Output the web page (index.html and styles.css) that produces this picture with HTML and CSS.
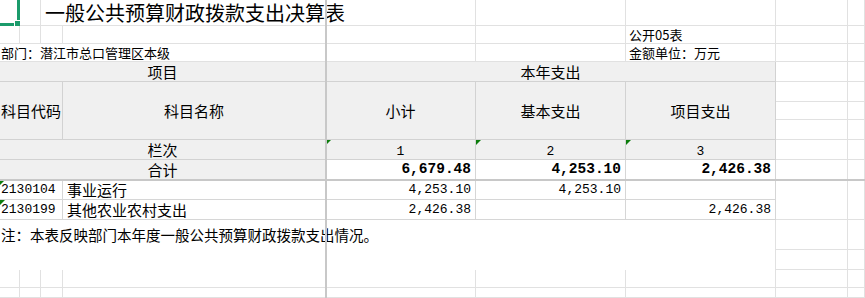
FILE: index.html
```html
<!DOCTYPE html>
<html lang="zh-CN">
<head>
<meta charset="utf-8">
<title>一般公共预算财政拨款支出决算表</title>
<link rel="stylesheet" href="styles.css">
</head>
<body>
<div class="sheet">
  <!-- row 1 -->
  <div class="c sel"></div>
  <div class="c"></div>
  <div class="c title span3">一般公共预算财政拨款支出决算表</div>
  <div class="c"></div><div class="c"></div><div class="c"></div><div class="c"></div>
  <!-- row 2 -->
  <div class="c"></div><div class="c"></div><div class="c"></div><div class="c"></div>
  <div class="c"></div><div class="c"></div>
  <div class="c txt">公开05表</div>
  <div class="c"></div><div class="c"></div>
  <!-- row 3 -->
  <div class="c txt left span4 nb">部门：潜江市总口管理区本级</div>
  <div class="c"></div><div class="c"></div>
  <div class="c txt">金额单位：万元</div>
  <div class="c"></div><div class="c"></div>
  <!-- row 4 -->
  <div class="c h span4">项目</div>
  <div class="c h span3">本年支出</div>
  <div class="c"></div><div class="c"></div>
  <!-- row 5-7 -->
  <div class="c h span3 rs3">科目代码</div>
  <div class="c h rs3">科目名称</div>
  <div class="c h rs3">小计</div>
  <div class="c h rs3">基本支出</div>
  <div class="c h rs3">项目支出</div>
  <div class="c"></div><div class="c"></div>
  <div class="c"></div><div class="c"></div>
  <div class="c"></div><div class="c"></div>
  <!-- row 8 -->
  <div class="c h span4">栏次</div>
  <div class="c h idx mark">1</div>
  <div class="c h idx mark">2</div>
  <div class="c h idx mark">3</div>
  <div class="c"></div><div class="c"></div>
  <!-- row 9 -->
  <div class="c h span4">合计</div>
  <div class="c num tot">6,679.48</div>
  <div class="c num tot">4,253.10</div>
  <div class="c num tot">2,426.38</div>
  <div class="c"></div><div class="c"></div>
  <!-- row 10 -->
  <div class="c code span3 mark">2130104</div>
  <div class="c name">事业运行</div>
  <div class="c num">4,253.10</div>
  <div class="c num">4,253.10</div>
  <div class="c num"></div>
  <div class="c rs2"></div><div class="c rs2"></div>
  <!-- row 11 -->
  <div class="c code span3 mark">2130199</div>
  <div class="c name">其他农业农村支出</div>
  <div class="c num">2,426.38</div>
  <div class="c num"></div>
  <div class="c num">2,426.38</div>
  <!-- row 12-13 -->
  <div class="c note span7 rs2">注：本表反映部门本年度一般公共预算财政拨款支出情况。</div>
  <div class="c"></div><div class="c"></div>
  <div class="c"></div><div class="c"></div>
  <!-- row 14 -->
  <div class="c"></div><div class="c"></div><div class="c"></div><div class="c"></div><div class="c"></div>
  <div class="c"></div><div class="c"></div><div class="c"></div><div class="c"></div>
  <!-- row 15 -->
  <div class="c"></div><div class="c"></div><div class="c"></div><div class="c"></div><div class="c"></div>
  <div class="c"></div><div class="c"></div><div class="c"></div><div class="c"></div>

  <div class="freeze-v"></div>
  <div class="freeze-h"></div>
</div>
</body>
</html>
```

FILE: styles.css
```css
html, body {
  margin: 0;
  padding: 0;
  background: #ffffff;
  overflow: hidden;
}

body {
  font-family: "Noto Sans CJK SC", "Noto Sans", sans-serif;
  color: #000000;
}

.sheet {
  position: relative;
  display: grid;
  grid-template-columns: 20px 21px 22px 263px 150px 150px 150px 72px 17px;
  grid-template-rows: 26px 18px 18px 20px 20px 18px 20px 20px 20px 20px 20px 30px 20px 18px 10px;
  width: 865px;
  height: 298px;
  overflow: hidden;
}

.c {
  box-sizing: border-box;
  position: relative;
  display: flex;
  align-items: center;
  border-right: 1px solid #e1e1e1;
  border-bottom: 1px solid #e1e1e1;
  white-space: nowrap;
  font-size: 13px;
  line-height: 1;
  min-width: 0;
}

.span3 { grid-column: span 3; }
.span4 { grid-column: span 4; }
.span7 { grid-column: span 7; }
.rs2 { grid-row: span 2; }
.rs3 { grid-row: span 3; }

.nb { border-right: none; }

/* selected cell A1 */
.sel {
  border-right: 3px solid #1b9b6b;
  border-bottom: 3px solid #1b9b6b;
}
.sel::after {
  content: "";
  position: absolute;
  right: -4px;
  bottom: -4px;
  width: 5px;
  height: 5px;
  background: #1b9b6b;
  border: 1px solid #ffffff;
}

.title {
  font-size: 20px;
  padding-left: 4px;
  padding-top: 1px;
}

.txt {
  padding-left: 3px;
  font-size: 13px;
}
.left {
  padding-left: 1px;
}

.h {
  background: #f0f0f0;
  border-right-color: #d2d2d2;
  border-bottom-color: #d2d2d2;
  justify-content: center;
  font-size: 15px;
}

.idx {
  font-family: "Liberation Mono", monospace;
  font-size: 13px;
  padding-top: 4px;
}

.num {
  justify-content: flex-end;
  padding-right: 4px;
  font-family: "Liberation Mono", monospace;
  font-size: 13px;
  border-right-color: #d6d6d6;
  border-bottom-color: #d6d6d6;
}

.tot {
  font-weight: bold;
  font-size: 14.5px;
}

.code {
  padding-left: 1px;
  font-family: "Liberation Mono", monospace;
  font-size: 13px;
  border-right-color: #d6d6d6;
  border-bottom-color: #d6d6d6;
}

.name {
  padding-left: 4px;
  font-size: 15px;
  border-right-color: #d6d6d6;
  border-bottom-color: #d6d6d6;
}

.note {
  align-items: flex-start;
  padding-top: 8px;
  padding-left: 1px;
  font-size: 14.5px;
  border-bottom: none;
}

.mark::before {
  content: "";
  position: absolute;
  left: 0;
  top: 0;
  border-top: 5px solid #0c7d0c;
  border-right: 5px solid transparent;
}

.freeze-v {
  position: absolute;
  left: 325px;
  top: 0;
  bottom: 0;
  width: 2px;
  background: #c8c8c8;
}

.freeze-h {
  position: absolute;
  left: 0;
  right: 0;
  top: 179px;
  height: 2px;
  background: #c8c8c8;
}
```
